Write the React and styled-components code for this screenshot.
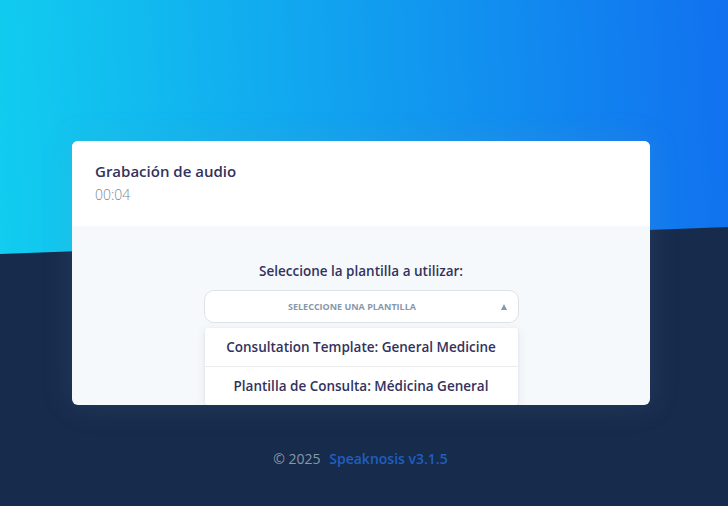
import React from 'react';
import styled, { createGlobalStyle } from 'styled-components';

const GlobalStyle = createGlobalStyle`
  html, body {
    margin: 0;
    padding: 0;
  }
  body {
    background-color: #172b4d;
    font-family: 'Open Sans', 'Noto Sans', sans-serif;
    -webkit-font-smoothing: antialiased;
  }
`;

const Page = styled.div`
  min-height: 506px;
  background-color: #172b4d;
  display: flex;
  flex-direction: column;
`;

const Hero = styled.div`
  height: 254px;
  background: linear-gradient(87deg, #11cdef 0, #1171ef 100%);
  clip-path: polygon(0 0, 100% 0, 100% 227px, 0 254px);
`;

const Main = styled.main`
  position: relative;
  z-index: 1;
  margin-top: -113px;
  padding: 0 78px 0 72px;
  display: flex;
  justify-content: center;
`;

const Card = styled.section`
  width: 578px;
  height: 264px;
  border-radius: 6px;
  overflow: hidden;
  background-color: #f6f9fc;
  box-shadow: 0 0 2rem 0 rgba(136, 152, 170, 0.15);
  display: flex;
  flex-direction: column;
`;

const CardHeader = styled.header`
  background-color: #fff;
  height: 85px;
  box-sizing: border-box;
  padding: 20px 23px 0;
`;

const Title = styled.h3`
  margin: 0;
  font-size: 15px;
  font-weight: 600;
  line-height: 20px;
  color: #32325d;
`;

const Elapsed = styled.div`
  margin-top: 4px;
  font-size: 14px;
  font-weight: 300;
  line-height: 20px;
  color: #7a8394;
`;

const CardBody = styled.div`
  flex: 1;
  padding: 35px 0 0;
  display: flex;
  flex-direction: column;
  align-items: center;
`;

const Label = styled.label`
  font-size: 13.5px;
  font-weight: 600;
  line-height: 20px;
  color: #32325d;
  margin-bottom: 9px;
`;

const SelectWrap = styled.div`
  position: relative;
  width: 315px;
`;

const SelectBox = styled.div`
  height: 33px;
  box-sizing: border-box;
  border: 1px solid #dee2e6;
  border-radius: 10px;
  background-color: #fff;
  padding-right: 18px;
  display: flex;
  align-items: center;
  justify-content: center;
  position: relative;
`;

const Placeholder = styled.span`
  font-size: 9px;
  font-weight: 700;
  color: #8898aa;
  text-transform: uppercase;
`;

const Caret = styled.span`
  position: absolute;
  right: 11px;
  top: 50%;
  transform: translateY(-50%);
  width: 0;
  height: 0;
  border-left: 3.5px solid transparent;
  border-right: 3.5px solid transparent;
  border-bottom: 6px solid #8898aa;
`;

const Menu = styled.ul`
  position: absolute;
  top: 38px;
  left: 1px;
  right: 1px;
  margin: 0;
  padding: 0;
  list-style: none;
  background-color: #fff;
  border-radius: 3px;
  box-shadow: 0 2px 10px rgba(50, 50, 93, 0.1), 0 1px 3px rgba(0, 0, 0, 0.06);
`;

const MenuItem = styled.li`
  height: 38px;
  display: flex;
  align-items: center;
  justify-content: center;
  font-size: 13.5px;
  font-weight: 600;
  color: #32325d;
  & + & {
    border-top: 1px solid #e9ecef;
  }
`;

const Footer = styled.footer`
  margin-top: 44px;
  padding-right: 7px;
  text-align: center;
  font-size: 14px;
  line-height: 20px;
  color: #8898aa;
`;

const Brand = styled.a`
  margin-left: 5px;
  color: #1f5fbf;
  font-weight: 600;
  text-decoration: none;
`;

const templates = [
  'Consultation Template: General Medicine',
  'Plantilla de Consulta: Médicina General',
];

const App = () => (
  <>
    <GlobalStyle />
    <Page>
      <Hero />
      <Main>
        <Card>
          <CardHeader>
            <Title>Grabación de audio</Title>
            <Elapsed>00:04</Elapsed>
          </CardHeader>
          <CardBody>
            <Label>Seleccione la plantilla a utilizar:</Label>
            <SelectWrap>
              <SelectBox>
                <Placeholder>Seleccione una plantilla</Placeholder>
                <Caret />
              </SelectBox>
              <Menu>
                {templates.map((t) => (
                  <MenuItem key={t}>{t}</MenuItem>
                ))}
              </Menu>
            </SelectWrap>
          </CardBody>
        </Card>
      </Main>
      <Footer>
        © 2025 <Brand href="#">Speaknosis v3.1.5</Brand>
      </Footer>
    </Page>
  </>
);

export default App;
